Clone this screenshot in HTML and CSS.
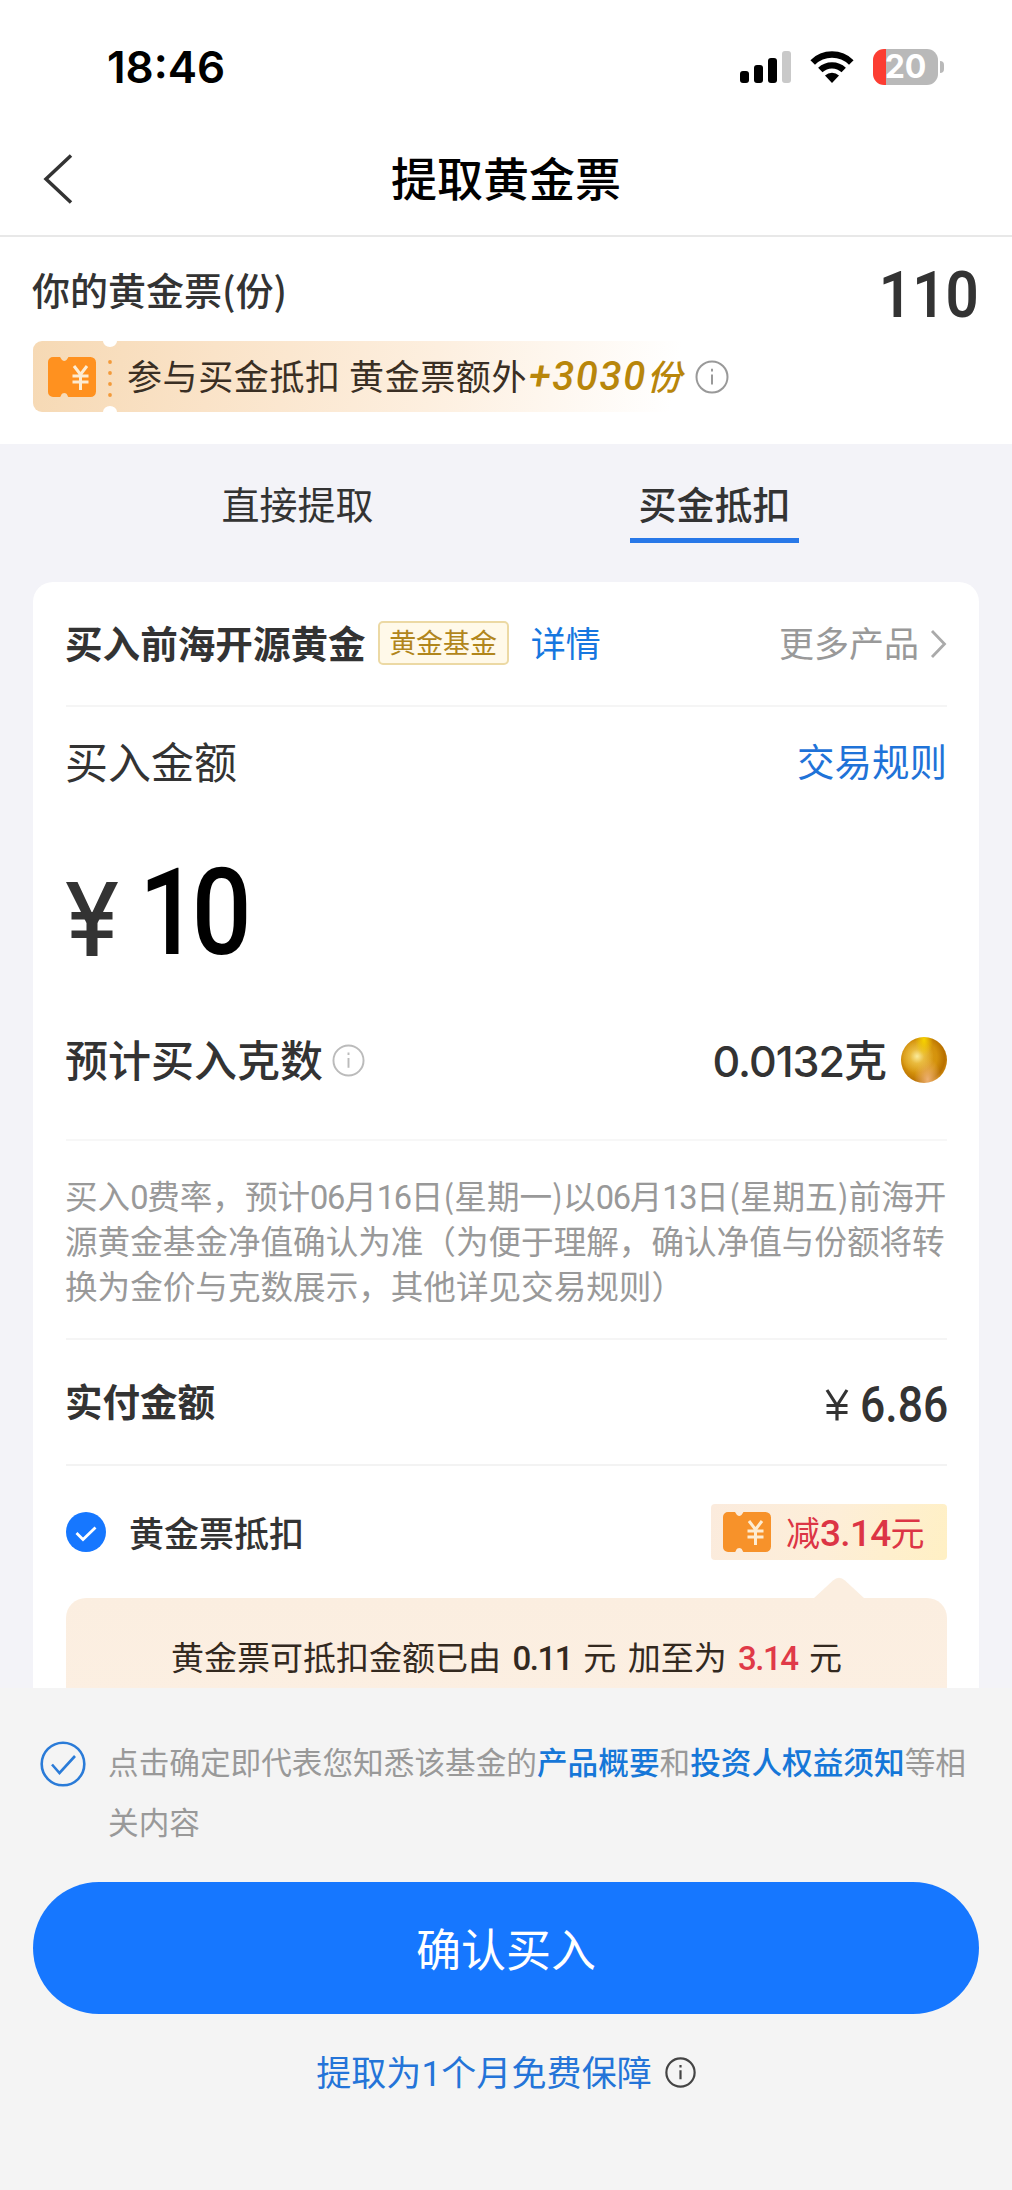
FILE: index.html
```html
<!DOCTYPE html>
<html lang="zh-CN">
<head>
<meta charset="utf-8">
<title>提取黄金票</title>
<link rel="stylesheet" href="styles.css">
</head>
<body>
<svg class="defs" width="0" height="0" aria-hidden="true">
  <defs>
    <symbol id="ticket" viewBox="0 0 48 40">
      <path d="M5 0h6.500c.8 0 1 .5 1.500 1.600 1.300 3.200 5.200 3.200 6.500 0C20 .5 20.200 0 21 0h21.500A5.500 5.500 0 0 1 48 5.500v29a5.500 5.500 0 0 1-5.500 5.500H21c-.8 0-1-.5-1.500-1.600-1.300-3.200-5.200-3.200-6.500 0C12.500 39.500 12.300 40 11.500 40H5a5 5 0 0 1-5-5V5a5 5 0 0 1 5-5z"/>
      <path class="ticket-mark" d="M26 9l6.500 8.500L39 9M24.500 19h16M24.500 25h16M32.500 18v15"/>
    </symbol>
    <symbol id="info" viewBox="0 0 34 34">
      <circle cx="17" cy="17" r="15.500"/>
      <path d="M17 14.500v10M17 8.800v2.600"/>
    </symbol>
  </defs>
</svg>

<header class="status">
  <span class="clock">18:46</span>
  <div class="indicators">
    <svg class="signal" viewBox="0 0 52 34" width="52" height="34">
      <rect x="0" y="21" width="9" height="12" rx="3"/>
      <rect x="14" y="15" width="9" height="18" rx="3"/>
      <rect x="28" y="8" width="9" height="25" rx="3"/>
      <rect class="dim" x="42" y="1" width="9" height="32" rx="3"/>
    </svg>
    <svg class="wifi" viewBox="0 0 44 34" width="44" height="34">
      <path d="M2.700 12.500a27.500 27.500 0 0 1 38.600 0" fill="none" stroke="#000" stroke-width="6.500"/>
      <path d="M10.300 20a17 17 0 0 1 23.400 0" fill="none" stroke="#000" stroke-width="6.300"/>
      <path d="M15 25.500a10.500 10.500 0 0 1 14 0L22 33z"/>
    </svg>
    <div class="battery"><span>20</span></div>
  </div>
</header>

<nav class="nav">
  <svg class="back" viewBox="0 0 30 50" width="30" height="50"><path d="M28 1.500L3 25l25 23.500"/></svg>
  <h1>提取黄金票</h1>
</nav>

<section class="summary">
  <div class="summary-row">
    <span class="summary-label">你的黄金票(份)</span>
    <span class="summary-count">110</span>
  </div>
  <div class="promo">
    <div class="promo-stub"><svg class="ticket"><use href="#ticket"/></svg></div>
    <svg class="perforation" viewBox="0 0 14 71" width="14" height="71">
      <path class="notch" d="M0 0h14A7 6 0 0 1 0 0zM0 71h14A7 6 0 0 0 0 71z"/>
      <g class="dots"><circle cx="7" cy="21" r="1.900"/><circle cx="7" cy="32" r="1.900"/><circle cx="7" cy="43" r="1.900"/><circle cx="7" cy="54" r="1.900"/></g>
    </svg>
    <span class="promo-text">参与买金抵扣 黄金票额外</span><em class="promo-bonus"><b>+3030</b>份</em>
    <svg class="info info-promo"><use href="#info"/></svg>
  </div>
</section>

<div class="tabs">
  <div class="tab"><span>直接提取</span></div>
  <div class="tab active"><span>买金抵扣</span></div>
</div>

<main class="card">
  <div class="row product">
    <span class="product-name">买入前海开源黄金</span>
    <span class="tag">黄金基金</span>
    <a class="detail">详情</a>
    <span class="more">更多产品</span>
    <svg class="chevron" viewBox="0 0 17 30" width="17" height="30"><path d="M2 2l12.500 13L2 28"/></svg>
  </div>
  <div class="row amount-head">
    <span class="amount-label">买入金额</span>
    <a class="rules">交易规则</a>
  </div>
  <div class="amount">
    <svg class="yen-large" viewBox="0 0 52 74" width="52" height="74"><path d="M0 0h11.500L26 31 40.500 0H52L34.500 35 31.500 41v33h-11V41l-3-6z"/><path d="M5.500 30h41v7.500h-41zM5.500 48.500h41V56h-41z"/></svg>
    <span>10</span>
  </div>
  <div class="row grams">
    <span class="grams-label">预计买入克数</span>
    <svg class="info info-grams"><use href="#info"/></svg>
    <span class="grams-value"><b>0.0132</b>克</span>
    <i class="bead"></i>
  </div>
  <div class="note">
    <p>买入<b>0</b>费率，预计<b>06</b>月<b>16</b>日(星期一)以<b>06</b>月<b>13</b>日(星期五)前海开</p>
    <p>源黄金基金净值确认为准（为便于理解，确认净值与份额将转</p>
    <p>换为金价与克数展示，其他详见交易规则）</p>
  </div>
  <div class="row pay">
    <span class="pay-label">实付金额</span>
    <svg class="yen-small" viewBox="0 0 26 32" width="26" height="32"><path d="M3 1l10 15.500L23 1M2.500 16.500h21M2.500 23.500h21M13 16v15.500"/></svg>
    <span class="pay-value">6.86</span>
  </div>
  <div class="row deduct">
    <svg class="checked" viewBox="0 0 40 40" width="40" height="40"><circle cx="20" cy="20" r="20"/><path d="M10.500 21l6.500 6.500L29.500 15.500"/></svg>
    <span class="deduct-label">黄金票抵扣</span>
    <span class="off"><svg class="ticket"><use href="#ticket"/></svg><span>减<b>3.14</b>元</span></span>
  </div>
  <div class="tip">
    <svg class="tip-arrow" viewBox="0 0 52 22" width="52" height="22"><path d="M0 22L20 3.500Q26-2 32 3.500L52 22z"/></svg>
    <p>黄金票可抵扣金额已由 <b>0.11</b> 元 加至为 <b class="red">3.14</b> 元</p>
  </div>
</main>

<footer class="bottom">
  <div class="agree">
    <svg class="agree-check" viewBox="0 0 46 46" width="46" height="46"><circle cx="23" cy="23" r="21.300"/><path d="M12 23.500l7.500 8.500L35 15"/></svg>
    <div class="agree-text">
      <p>点击确定即代表您知悉该基金的<a>产品概要</a>和<a>投资人权益须知</a>等相</p>
      <p>关内容</p>
    </div>
  </div>
  <button class="confirm">确认买入</button>
  <div class="guarantee"><span>提取为<b>1</b>个月免费保障</span><svg class="info info-dark"><use href="#info"/></svg></div>
</footer>
</body>
</html>
```
FILE: styles.css
```css
* { box-sizing: border-box; margin: 0; padding: 0; }

body {
  width: 1012px;
  height: 2190px;
  overflow: hidden;
  background: #f3f3f8;
  color: #333;
  font-family: "Noto Sans CJK SC", sans-serif;
  line-height: 1;
  white-space: nowrap;
}

b { font-family: Roboto, sans-serif; font-weight: 500; line-height: 0; }
.defs { display: block; position: absolute; }

/* Status bar */
.status {
  height: 122px;
  padding: 12px 68px 0 107px;
  display: flex;
  align-items: center;
  justify-content: space-between;
  background: #fff;
  color: #000;
}
.clock { font: 600 44px/1 Inter, sans-serif; }
.indicators { display: flex; align-items: center; }
.signal .dim { fill: #c9c9c9; }
.wifi { margin: 0 19px 0 18px; }
.battery {
  position: relative;
  width: 65px;
  height: 36px;
  margin-right: 6px;
  border-radius: 11px;
  background: linear-gradient(90deg, #fc3d32 13px, #b9b9b9 13px);
  color: #fff;
  font: 700 32px/36px Inter, sans-serif;
  text-align: center;
}
.battery::after {
  content: "";
  position: absolute;
  left: 67px;
  top: 12px;
  width: 4px;
  height: 12px;
  border-radius: 0 4px 4px 0;
  background: #b9b9b9;
}

/* Navigation */
.nav {
  height: 115px;
  padding: 0 43px;
  display: grid;
  grid-template-columns: 30px 1fr 30px;
  align-items: center;
  background: #fff;
  border-bottom: 2px solid #e8e8e8;
}
.back { fill: none; stroke: #333; stroke-width: 3.5; }
.nav h1 { padding-bottom: 6px; text-align: center; font-size: 46px; font-weight: 500; line-height: 1; color: #000; }

/* Balance */
.summary { height: 207px; padding: 0 33px; background: #fff; }
.summary-row {
  height: 104px;
  padding-top: 6px;
  display: flex;
  align-items: center;
  justify-content: space-between;
}
.summary-label { margin-left: -1px; padding-bottom: 6px; font-size: 38px; font-weight: 500; }
.summary-count {
  padding-top: 7px;
  font: 600 64px/1 Roboto, sans-serif;
  transform: scaleX(.91);
  transform-origin: right;
}
.promo {
  height: 71px;
  display: flex;
  align-items: center;
  border-radius: 9px;
  background: linear-gradient(100deg, #f6d9b4 0, #fae3c8 180px, #fdefdf 400px, #fff 640px);
}
.promo-stub { width: 70px; padding-left: 15px; display: flex; }
.ticket { display: block; width: 48px; height: 40px; fill: #ff911f; }
.ticket-mark { fill: none; stroke: #fdecd2; stroke-width: 3; }
.notch { fill: #fff; }
.dots { fill: #f39a3a; }
.promo-text { margin-left: 10px; padding-bottom: 4px; font-size: 35px; letter-spacing: .6px; color: #3a2f24; }
.promo-bonus { padding-bottom: 4px; font-size: 35px; font-weight: 500; color: #b8860b; font-style: italic; margin-left: 2px; }
.promo-bonus b { font-size: 40px; letter-spacing: 1.6px; }
.info { display: block; width: 34px; height: 34px; fill: none; stroke: #999; stroke-width: 2; }
.info-promo { margin-left: 13px; }

/* Tabs */
.tabs { height: 138px; padding: 0 89px; display: flex; }
.tab { flex: 1; display: flex; flex-direction: column; align-items: center; }
.tab span { width: 169px; height: 99px; padding-top: 27px; line-height: 64px; text-align: center; font-size: 38px; }
.tab.active span { font-weight: 500; border-bottom: 5px solid #2878e8; }

/* Purchase card */
.card {
  height: 1106px;
  margin: 0 33px;
  padding: 0 32px 0 33px;
  border-radius: 20px 20px 0 0;
  background: #fff;
  overflow: hidden;
}
.row { display: flex; align-items: center; }
.product { height: 125px; padding-bottom: 4px; border-bottom: 2px solid #f5f5f5; }
.product-name, .amount-label, .grams-label { margin-left: -1px; }
.product-name { font-size: 37.6px; font-weight: 700; }
.tag {
  width: 131px;
  height: 44px;
  margin: 2px 0 0 12px;
  border: 2px solid #ecd9a4;
  border-radius: 5px;
  background: #fff9e9;
  color: #b1861c;
  font-size: 27px;
  line-height: 37px;
  text-align: center;
}
.detail { margin-left: 22px; font-size: 35px; color: #1677e0; }
.more { margin-left: auto; font-size: 35px; color: #999; }
.chevron { margin: 4px 0 0 11px; fill: none; stroke: #aaa; stroke-width: 2.8; }
.amount-head { height: 112px; padding-bottom: 6px; justify-content: space-between; }
.amount-label { font-size: 43px; }
.rules { font-size: 37.5px; color: #1f73d8; }
.amount { height: 182px; display: flex; align-items: center; }
.yen-large { margin-top: 18px; fill: #333; }
.amount span {
  margin: 6px 0 0 21px;
  font: 500 121px/1 Roboto, sans-serif;
  letter-spacing: -8px;
  color: #000;
  transform: scaleX(.87);
  transform-origin: left;
}
.grams { height: 140px; padding-bottom: 20px; border-bottom: 2px solid #f7f7f7; }
.grams-label { padding-bottom: 3px; font-size: 43px; font-weight: 500; }
.info-grams { margin-left: 9px; width: 33px; height: 33px; stroke: #bbb; }
.grams-value { margin-left: auto; padding-bottom: 4px; font-size: 43px; font-weight: 500; }
.grams-value b { font-family: Inter, sans-serif; font-size: 43px; letter-spacing: -1px; }
.bead {
  width: 46px;
  height: 46px;
  margin-left: 14px;
  border-radius: 50%;
  background:
    radial-gradient(ellipse at 50% 6%, #f7d400 0, rgba(247, 205, 0, 0) 28%),
    radial-gradient(circle at 35% 42%, #fbeb9a 0, rgba(240, 200, 80, .7) 18%, rgba(225, 165, 30, 0) 42%),
    radial-gradient(ellipse at 58% 92%, #eeb070 0, rgba(225, 150, 70, 0) 36%),
    radial-gradient(circle at 42% 44%, #dda21c 0, #d4920c 45%, #b87000 66%, #d8930f 80%);
}
.note { height: 199px; padding-top: 31px; border-bottom: 2px solid #f5f5f5; color: #999; font-size: 32.6px; }
.note p { margin-left: -1px; line-height: 45px; }
.note b { font-weight: 400; letter-spacing: -1.3px; }
.pay { height: 126px; border-bottom: 2px solid #f3f3f3; }
.pay-label { margin: 0 auto 0 -1px; padding-bottom: 4px; font-size: 37.5px; font-weight: 700; }
.yen-small { margin-top: 6px; fill: none; stroke: #333; stroke-width: 3.2; }
.pay-value {
  width: 87px;
  margin-left: 10px;
  padding-top: 5px;
  font: 500 50px/1 Roboto, sans-serif;
  transform: scaleX(.89);
  transform-origin: left;
}
.deduct { height: 132px; }
.checked { fill: #1677ff; }
.checked path { fill: none; stroke: #fff; stroke-width: 2.8; }
.deduct-label { margin-left: 23px; padding-bottom: 2px; font-size: 35px; font-weight: 500; }
.off {
  width: 236px;
  height: 56px;
  margin-left: auto;
  padding-left: 12px;
  display: flex;
  align-items: center;
  gap: 15px;
  border-radius: 4px;
  background: linear-gradient(110deg, #fbebdd, #fdeed8 50%, #fff0c4);
  color: #dc3545;
  font-size: 34px;
}
.off b { font-size: 37px; letter-spacing: -.7px; }
.off .ticket { fill: #f7922a; }
.tip {
  position: relative;
  height: 100px;
  border-radius: 20px 20px 0 0;
  background: linear-gradient(#fbeee0, #fcefe2);
}
.tip-arrow { position: absolute; left: 747px; top: -21px; fill: #fbeee0; }
.tip p { line-height: 117px; text-align: center; font-size: 33px; word-spacing: 4px; color: #33291f; }
.tip b { letter-spacing: -1.5px; }
.tip .red { color: #e03a48; }

/* Bottom sheet */
.bottom { height: 502px; padding: 0 33px; background: #f4f4f4; }
.agree { height: 194px; padding: 43px 0 0 7px; display: flex; align-items: flex-start; }
.agree-check { margin-top: 10px; fill: none; stroke: #2a7bd8; stroke-width: 2.6; }
.agree-text { margin-left: 22px; font-size: 30.65px; color: #999; }
.agree-text p { line-height: 60px; }
.agree-text a { color: #1677d8; font-weight: 500; }
.confirm {
  display: block;
  width: 946px;
  height: 132px;
  border: 0;
  border-radius: 66px;
  background: #1677ff;
  color: #fff;
  font: 400 45px/132px "Noto Sans CJK SC", sans-serif;
}
.guarantee { height: 116px; display: flex; align-items: center; justify-content: center; font-size: 35px; color: #2474d8; }
.guarantee span { padding-bottom: 4px; letter-spacing: .1px; }
.guarantee b { font-weight: 400; }
.info-dark { width: 31px; height: 31px; margin-left: 13px; stroke: #444; stroke-width: 2.4; }
```
